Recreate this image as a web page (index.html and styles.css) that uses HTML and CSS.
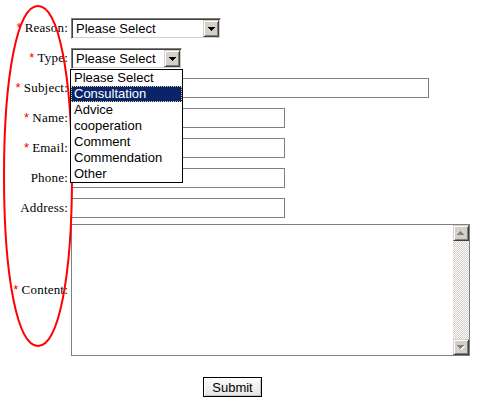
FILE: index.html
```html
<!DOCTYPE html>
<html lang='en'>
<head>
    <meta charset='UTF-8'>
    <meta name='viewport' content='width=device-width, initial-scale=1.0'>
    <title>Contact</title>

    <link rel="stylesheet" href="styles.css">
</head>
<body>
    <form class='contact'>
        <div class='row'>
            <label class='label' for='reason'><span class='req'>*</span>Reason:</label>
            <span class='combo combo_reason'>
                <select id='reason'><option>Please Select</option></select>
                <span class='combo_button'>
                    <svg width='7' height='4'><path d='M0 0h7v1h-1v1h-1v1h-1v1h-1v-1h-1v-1h-1v-1h-1z' fill='#000'/></svg>
                </span>
            </span>
        </div>
        <div class='row'>
            <label class='label' for='type'><span class='req'>*</span>Type:</label>
            <span class='combo combo_type'>
                <select id='type'>
                    <option>Please Select</option>
                    <option>Consultation</option>
                    <option>Advice</option>
                    <option>cooperation</option>
                    <option>Comment</option>
                    <option>Commendation</option>
                    <option>Other</option>
                </select>
                <span class='combo_button'>
                    <svg width='7' height='4'><path d='M0 0h7v1h-1v1h-1v1h-1v1h-1v-1h-1v-1h-1v-1h-1z' fill='#000'/></svg>
                </span>
                <!-- open list of the Type box -->
                <span class='dropdown'>
                    <span class='dropdown_item'>Please Select</span>
                    <span class='dropdown_item selected'>Consultation</span>
                    <span class='dropdown_item'>Advice</span>
                    <span class='dropdown_item'>cooperation</span>
                    <span class='dropdown_item'>Comment</span>
                    <span class='dropdown_item'>Commendation</span>
                    <span class='dropdown_item'>Other</span>
                </span>
            </span>
        </div>
        <div class='row'>
            <label class='label' for='subject'><span class='req'>*</span>Subject:</label>
            <input type='text' id='subject' class='field field_long'>
        </div>
        <div class='row'>
            <label class='label' for='name'><span class='req'>*</span>Name:</label>
            <input type='text' id='name' class='field'>
        </div>
        <div class='row'>
            <label class='label' for='email'><span class='req'>*</span>Email:</label>
            <input type='text' id='email' class='field'>
        </div>
        <div class='row'>
            <label class='label' for='phone'>Phone:</label>
            <input type='text' id='phone' class='field'>
        </div>
        <div class='row'>
            <label class='label' for='address'>Address:</label>
            <input type='text' id='address' class='field'>
        </div>
        <div class='row row_content'>
            <label class='label' for='content'><span class='req'>*</span>Content:</label>
            <div class='memo'>
                <textarea id='content'></textarea>
                <div class='scrollbar'>
                    <span class='scroll_button'>
                        <svg width='8' height='5'>
                            <path d='M4 1h1v1h1v1h1v1h-7v-1h1v-1h1v-1h1z' fill='#fff'/>
                            <path d='M3 0h1v1h1v1h1v1h1v1h-7v-1h1v-1h1v-1h1z' fill='#808080'/>
                        </svg>
                    </span>
                    <span class='scroll_track'></span>
                    <span class='scroll_button'>
                        <svg width='8' height='5'>
                            <path d='M1 1h7v1h-1v1h-1v1h-1v1h-1v-1h-1v-1h-1v-1h-1z' fill='#fff'/>
                            <path d='M0 0h7v1h-1v1h-1v1h-1v1h-1v-1h-1v-1h-1v-1h-1z' fill='#808080'/>
                        </svg>
                    </span>
                </div>
            </div>
        </div>
        <div class='actions'>
            <button type='button' class='submit'>Submit</button>
        </div>
    </form>

    <!-- red hand-drawn mark round the label column -->
    <svg class='marker' width='80' height='360'>
        <path d='M38 6C58.4 6 72 74 72 176C72 278 58.4 346 38 346C17.6 346 4 278 4 176C4 74 17.6 6 38 6Z' fill='none' stroke='#f00' stroke-width='2'/>
    </svg>
</body>
</html>
```

FILE: styles.css
```css
body
{
    margin: 8px;
    background: #fff;
    font-family: 'Liberation Serif', serif;
    font-size: 13px;
    color: #000;
}
.contact
{
    display: flex;
    flex-direction: column;
    padding-top: 5px;
}
.row
{
    display: flex;
    align-items: center;
    height: 30px;
}
.label
{
    width: 60px;
    margin-right: 3px;
    text-align: right;
    letter-spacing: 0.2px;
    white-space: nowrap;
}
.req
{
    font-family: 'Liberation Sans', sans-serif;
    color: #f00;
    margin-right: 3px;
}
.combo
{
    display: inline-flex;
    box-sizing: border-box;
    height: 21px;
    margin-top: 1px;
    padding: 1px;
    border: 1px solid;
    border-color: #808080 #fff #fff #808080;
    box-shadow: inset 1px 1px 0 #404040, inset -1px -1px 0 #d4d0c8;
    background: #fff;
}
.combo_reason
{
    width: 150px;
}
.combo_type
{
    position: relative;
    width: 111px;
}
.combo select
{
    flex: 1;
    min-width: 0;
    height: 17px;
    margin: 0;
    padding: 0 0 0 3px;
    border: none;
    outline: none;
    background: #fff;
    appearance: none;
    font-family: 'Liberation Sans', sans-serif;
    font-size: 13px;
    color: #000;
}
.combo_button,
.scroll_button
{
    display: flex;
    align-items: center;
    justify-content: center;
    box-sizing: border-box;
    width: 16px;
    height: 17px;
    border: 1px solid;
    border-color: #d4d0c8 #404040 #404040 #d4d0c8;
    box-shadow: inset 1px 1px 0 #fff, inset -1px -1px 0 #808080;
    background: #d4d0c8;
}
.combo_button svg,
.scroll_button svg
{
    display: block;
}
.dropdown
{
    position: absolute;
    top: 20px;
    left: -2px;
    z-index: 1;
    display: flex;
    flex-direction: column;
    box-sizing: border-box;
    width: 113px;
    border: 1px solid #000;
    background: #fff;
    font-family: 'Liberation Sans', sans-serif;
    font-size: 13px;
    line-height: 16px;
}
.dropdown_item
{
    height: 16px;
    padding-left: 3px;
    white-space: nowrap;
}
.dropdown_item.selected
{
    box-sizing: border-box;
    padding-left: 2px;
    border: 1px dotted #e8cf8a;
    background: #0a246a;
    color: #fff;
    line-height: 14px;
}
.field
{
    box-sizing: border-box;
    width: 214px;
    height: 20px;
    margin: 0;
    padding: 0 2px;
    border: 1px solid #808080;
    font-family: 'Liberation Sans', sans-serif;
    font-size: 13px;
}
.field_long
{
    width: 358px;
}
.row_content
{
    height: auto;
    padding-top: 1px;
}
.memo
{
    display: flex;
    box-sizing: border-box;
    width: 399px;
    height: 132px;
    border: 1px solid #808080;
    background: #fff;
}
.memo textarea
{
    flex: 1;
    margin: 0;
    padding: 2px;
    border: none;
    outline: none;
    resize: none;
    overflow: hidden;
    font-family: 'Liberation Sans', sans-serif;
    font-size: 13px;
}
.scrollbar
{
    display: flex;
    flex-direction: column;
    width: 16px;
}
.scroll_button
{
    height: 16px;
}
.scroll_track
{
    flex: 1;
    background: repeating-conic-gradient(#d4d0c8 0 25%, #fff 0 50%) 0 0 / 2px 2px;
}
.actions
{
    margin-top: 21px;
    padding-left: 195px;
}
.submit
{
    box-sizing: border-box;
    width: 59px;
    height: 20px;
    padding: 0;
    border: 1px solid #000;
    background: linear-gradient(#fdfdfd, #e4e4e4);
    box-shadow: inset 1px 1px 0 #fff, inset -1px -1px 0 #c4c4c4;
    font-family: 'Liberation Sans', sans-serif;
    font-size: 13px;
    color: #000;
}
.marker
{
    position: absolute;
    top: 0;
    left: 0;
    pointer-events: none;
}
```
